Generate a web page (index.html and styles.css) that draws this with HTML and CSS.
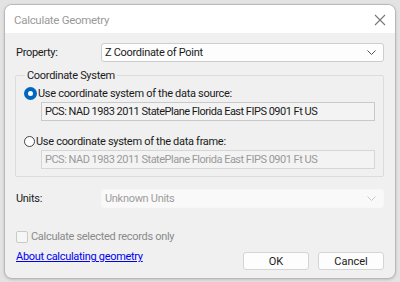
FILE: index.html
```html
<!DOCTYPE html>
<html lang="en">
<head>
    <meta charset="UTF-8">
    <title>Calculate Geometry</title>
    <link rel="stylesheet" href="styles.css">
</head>
<body>
    <div class="dialog">
        <div class="titlebar">
            <span class="title">Calculate Geometry</span>
            <svg class="close" width="12" height="12" viewBox="0 0 12 12">
                <path d="M1 1 L11 11 M11 1 L1 11" stroke="#777" stroke-width="1.1" fill="none"/>
            </svg>
        </div>
        <div class="content">
            <div class="row">
                <label class="lbl">Property:</label>
                <div class="select">
                    <span>Z Coordinate of Point</span>
                    <svg width="9" height="5" viewBox="0 0 9 5"><path d="M0.5 0.5 L4.5 4.5 L8.5 0.5" stroke="#555" fill="none"/></svg>
                </div>
            </div>

            <fieldset class="group">
                <legend>Coordinate System</legend>
                <div class="radio-row">
                    <span class="radio checked"></span>
                    <span>Use coordinate system of the data source:</span>
                </div>
                <div class="textbox">PCS: NAD 1983 2011 StatePlane Florida East FIPS 0901 Ft US</div>
                <div class="radio-row second">
                    <span class="radio"></span>
                    <span>Use coordinate system of the data frame:</span>
                </div>
                <div class="textbox disabled">PCS: NAD 1983 2011 StatePlane Florida East FIPS 0901 Ft US</div>
            </fieldset>

            <div class="row units">
                <label class="lbl">Units:</label>
                <div class="select disabled">
                    <span>Unknown Units</span>
                    <svg width="9" height="5" viewBox="0 0 9 5"><path d="M0.5 0.5 L4.5 4.5 L8.5 0.5" stroke="#c8c8c8" fill="none"/></svg>
                </div>
            </div>

            <div class="check-row">
                <span class="checkbox"></span>
                <span>Calculate selected records only</span>
            </div>

            <div class="footer">
                <a href="#" class="link">About calculating geometry</a>
                <div class="buttons">
                    <button class="btn">OK</button>
                    <button class="btn">Cancel</button>
                </div>
            </div>
        </div>
    </div>
</body>
</html>
```

FILE: styles.css
```css
html, body {
    margin: 0;
    padding: 0;
}

body {
    background-color: #e3e3e3;
    width: 400px;
    height: 282px;
    padding: 4px 4px 0 4px;
    box-sizing: border-box;
    font-family: Roboto, "Noto Sans", sans-serif;
    font-size: 11px;
    letter-spacing: -0.3px;
    color: #1a1a1a;
}

.dialog {
    height: 273px;
    border: 1px solid #b9b9b9;
    border-radius: 8px;
    background-color: #f0f0f0;
    overflow: hidden;
    box-shadow: 0 1px 3px rgba(0, 0, 0, 0.15);
}

.titlebar {
    height: 28px;
    background-color: #ffffff;
    display: flex;
    align-items: center;
    justify-content: space-between;
    padding: 0 9px 0 9px;
}

.title {
    color: #9a9a9a;
    font-size: 11.5px;
    letter-spacing: -0.3px;
    padding-top: 2px;
}

.close {
    margin-top: 1px;
}

.content {
    padding: 9px 11px 0 11px;
}

.row {
    display: flex;
    align-items: center;
    height: 20px;
}

.lbl {
    width: 85px;
}

.select {
    flex: 1;
    height: 19px;
    box-sizing: border-box;
    border: 1px solid #cdcdcd;
    border-radius: 3px;
    background-color: #fdfdfd;
    display: flex;
    align-items: center;
    justify-content: space-between;
    padding: 0 7px 0 3px;
}

.select.disabled {
    border-color: #f7f7f7;
    background-color: #f9f9f9;
    color: #9d9d9d;
}

.group {
    margin: 7px 0 0 -1px;
    padding: 4px 8px 7px 8px;
    border: 1px solid #dcdcdc;
    border-radius: 2px;
}

.group legend {
    padding: 0 2px;
    margin-left: 1px;
}

.radio-row {
    display: flex;
    align-items: center;
    gap: 1px;
    height: 14px;
}

.radio-row.second {
    margin-top: 13px;
}

.radio {
    width: 11px;
    height: 11px;
    border: 1px solid #444;
    border-radius: 50%;
    box-sizing: border-box;
    background-color: #fff;
}

.radio.checked {
    border: 4px solid #0067c0;
    width: 13px;
    height: 13px;
}

.textbox {
    margin: 2px 0 0 17px;
    height: 19px;
    box-sizing: border-box;
    border: 1px solid #c9c9c9;
    background-color: #f3f3f3;
    padding: 0 3px;
    letter-spacing: -0.5px;
    display: flex;
    align-items: center;
}

.textbox.disabled {
    color: #9a9a9a;
    border-color: #d6d6d6;
}

.units {
    margin-top: 11px;
}

.check-row {
    display: flex;
    align-items: center;
    gap: 3px;
    margin-top: 22px;
    color: #8a8a8a;
}

.checkbox {
    width: 12px;
    height: 12px;
    border: 1px solid #cacaca;
    border-radius: 2px;
    box-sizing: border-box;
    background-color: #f6f6f6;
}

.footer {
    display: flex;
    justify-content: space-between;
    margin-top: 7px;
}

.link {
    color: #0000f0;
    text-decoration: underline;
}

.buttons {
    display: flex;
    gap: 9px;
    margin-top: 2px;
}

.btn {
    width: 66px;
    height: 18px;
    font-family: inherit;
    font-size: 11px;
    letter-spacing: 0;
    color: #1a1a1a;
    background-color: #fdfdfd;
    border: 1px solid #d4d4d4;
    border-radius: 3px;
    padding: 0;
}
```
